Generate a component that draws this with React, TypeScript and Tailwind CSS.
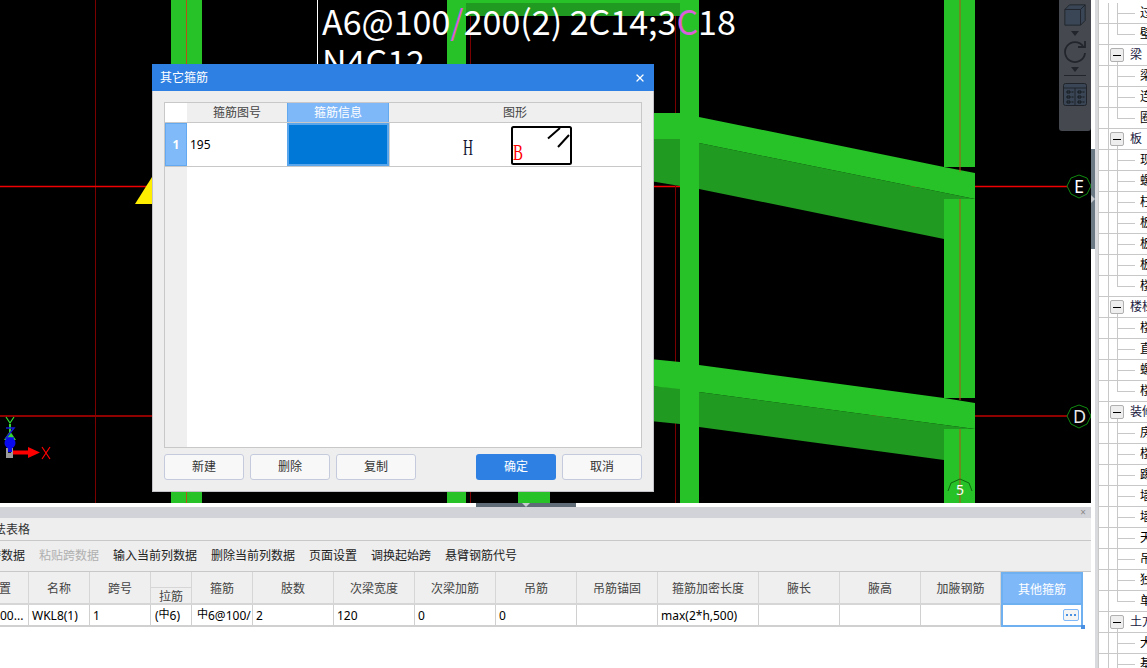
import React from 'react';
import { X } from 'lucide-react';

const uiFont = "font-['Noto_Sans','Noto_Sans_CJK_SC',sans-serif]";

const CanvasDrawing = () => (
  <svg width="1091" height="503" viewBox="0 0 1091 503" className="absolute left-0 top-0">
    {/* axis lines */}
    <line x1="95.5" y1="0" x2="95.5" y2="503" stroke="#7a0000" />
    <line x1="0" y1="186.5" x2="1068" y2="186.5" stroke="#f00000" strokeWidth="1.5" />
    <line x1="0" y1="416" x2="1068" y2="416" stroke="#8f0000" strokeWidth="2" />
    <line x1="317.5" y1="0" x2="317.5" y2="70" stroke="#ffffff" />

    {/* columns */}
    <rect x="171" y="0" width="31" height="503" fill="#27c227" />
    <line x1="186.5" y1="0" x2="186.5" y2="503" stroke="#b8501a" />
    <rect x="447" y="0" width="252" height="3" fill="#27c227" />
    <rect x="465" y="3" width="215" height="13" fill="#209a20" />
    <rect x="447" y="0" width="19" height="503" fill="#27c227" />
    <rect x="518" y="480" width="32" height="23" fill="#27c227" />
    <line x1="470.5" y1="16" x2="470.5" y2="503" stroke="#7a0000" />
    <line x1="675.5" y1="16" x2="675.5" y2="503" stroke="#7a0000" />

    {/* upper beam */}
    <polygon points="650,139 680,139 699,143 975,199 944,199 944,239 699,189 680,186 650,181" fill="#209a20" />
    <polygon points="650,113 680,113 699,117 944,167 975,173 975,199 699,143 680,139 650,139" fill="#27c227" />
    {/* lower beam */}
    <polygon points="650,386 680,388 699,392 975,429 944,429 944,460 699,427 680,424 650,421" fill="#209a20" />
    <polygon points="650,359 680,362 699,365 944,398 975,403 975,429 699,392 680,389 650,386" fill="#27c227" />

    <rect x="680" y="0" width="19" height="503" fill="#27c227" />
    <rect x="944" y="0" width="31" height="167" fill="#27c227" />
    <rect x="944" y="199" width="31" height="199" fill="#27c227" />
    <rect x="944" y="429" width="31" height="74" fill="#27c227" />
    <line x1="960" y1="0" x2="960" y2="172" stroke="#b8501a" />
    <line x1="960" y1="199" x2="960" y2="400" stroke="#b8501a" />
    <line x1="960" y1="429" x2="960" y2="503" stroke="#b8501a" />

    {/* grid bubbles */}
    <polygon points="1079,175 1087,178 1091,186 1087,194 1079,198 1071,194 1067,186 1071,178" fill="#000000" stroke="#0f8a0f" />
    <polygon points="1079,405 1087,408 1091,416 1087,424 1079,428 1071,424 1067,416 1071,408" fill="#000000" stroke="#0f8a0f" />
    <path d="M948 491 L951 483 L960 479 L969 483 L972 491" fill="none" stroke="#0f6a0f" />

    {/* yellow marker */}
    <polygon points="135,204 152,177 152,204" fill="#ffee00" />

    {/* origin gizmo */}
    <rect x="6" y="448" width="7" height="10" fill="#9a9a9a" />
    <rect x="8" y="448" width="3" height="5" fill="#1a1a1a" />
    <polygon points="10,431 16,440 4,440" fill="#33d633" />
    <line x1="10" y1="424" x2="10" y2="434" stroke="#33d633" strokeWidth="2" />
    <path d="M6 428 H14 L6 438 H14" fill="none" stroke="#1a1ad8" strokeWidth="1.5" />
    <circle cx="10" cy="443" r="5.5" fill="#0a0aee" />
    <rect x="8" y="447" width="4" height="5" fill="#0a0aee" />
    <rect x="13" y="450.5" width="16" height="4" fill="#ff0000" />
    <polygon points="28,447 40,452.5 28,458" fill="#ff0000" />
    <path d="M6 417 L10 423 L14 417" fill="none" stroke="#33e033" strokeWidth="1.2" />
    <path d="M42 447 L50 459 M50 447 L42 459" fill="none" stroke="#ff0000" strokeWidth="1.2" />
  </svg>
);

const ViewWidget = () => (
  <div className="absolute right-0 top-0 flex h-[131px] w-[32px] flex-col items-center rounded-b-[3px] bg-[#45494f] pt-[3px]">
    <svg width="24" height="24" viewBox="0 0 26 24">
      <path d="M2 6 L7 1 H24 V18 L19 23 H2 Z" fill="#3a4656" stroke="#20242a" />
      <path d="M2 6 H19 V23 M19 6 L24 1" fill="none" stroke="#20242a" />
    </svg>
    <svg width="8" height="5" viewBox="0 0 8 5" className="mt-[4px]">
      <polygon points="0,0 8,0 4,5" fill="#22262c" />
    </svg>
    <svg width="24" height="24" viewBox="0 0 24 24" className="mt-[4px]">
      <path d="M20 6 A10 10 0 1 0 22 13" fill="none" stroke="#22262c" strokeWidth="1.8" />
      <path d="M15 7 H22 V1" fill="none" stroke="#22262c" strokeWidth="1.8" />
    </svg>
    <svg width="8" height="5" viewBox="0 0 8 5" className="mt-[3px]">
      <polygon points="0,0 8,0 4,5" fill="#22262c" />
    </svg>
    <div className="mt-[3px] h-px w-[22px] bg-[#22262c]" />
    <svg width="24" height="23" viewBox="0 0 24 23" className="mt-[7px]">
      <rect x="0.5" y="0.5" width="23" height="22" rx="2" fill="#3a4656" stroke="#20242a" />
      <path d="M1 5 H23 M12 5 V22" stroke="#20242a" />
      <path d="M4 8 H7 V10 H4 Z M4 13 H7 V15 H4 Z M4 18 H7 V20 H4 Z M15 8 H18 V10 H15 Z M15 13 H18 V15 H15 Z M15 18 H18 V20 H15 Z" fill="none" stroke="#15181c" />
      <path d="M8.5 9 H10.5 M8.5 14 H10.5 M8.5 19 H10.5 M19.5 9 H21.5 M19.5 14 H21.5 M19.5 19 H21.5" stroke="#15181c" />
    </svg>
  </div>
);

const dialogButton = 'flex h-[26px] w-[80px] items-center justify-center rounded-[3px] border border-[#c5cbdc] bg-[#f8f8f8] text-[12px] text-[#333333]';

const StirrupDialog = () => (
  <div className="absolute left-[152px] top-[64px] flex h-[428px] w-[502px] flex-col border border-t-0 border-[#c4c4c8] bg-[#eeeeee]">
    <div className="-mx-px flex h-[27px] shrink-0 items-center justify-between bg-[#2e80e2] pl-[8px] pr-[8px] text-[12px] text-white">
      <span>其它箍筋</span>
      <X size={12} strokeWidth={2.5} />
    </div>
    <div className="mx-[11px] mt-[11px] flex h-[346px] w-[478px] flex-col border border-[#c8c8c8] bg-white">
      <div className="grid h-[20px] shrink-0 grid-cols-[22px_100px_102px_1fr] border-b border-[#c8c8c8] text-[12px] leading-[19px] text-[#444444]">
        <div className="bg-white" />
        <div className="bg-[#efefef] text-center">箍筋图号</div>
        <div className="border-x border-[#62a9ef] bg-[#7fb8f8] text-center text-white">箍筋信息</div>
        <div className="bg-[#efefef] text-center">图形</div>
      </div>
      <div className="grid h-[44px] shrink-0 grid-cols-[22px_100px_102px_1fr] border-b border-[#c8c8c8]">
        <div className="flex items-center justify-center border border-[#62a9ef] bg-[#80baf9] text-[12px] font-bold text-white">1</div>
        <div className="pl-[3px] pt-[12px] text-[12px] leading-[20px] text-black">195</div>
        <div className="border-2 border-[#5aa6ec] bg-[#0078d7]" />
        <div className="relative border-l border-[#d0d0d0]">
          <svg width="200" height="43" viewBox="0 0 200 43" className="absolute left-[69px] top-0">
            <text x="4" y="32" fontFamily="'Liberation Serif', serif" fontSize="23" textLength="10" lengthAdjust="spacingAndGlyphs" fill="#101030">H</text>
            <rect x="53" y="4" width="59" height="37" rx="1.5" fill="#ffffff" stroke="#000000" strokeWidth="2" />
            <path d="M89 15.5 L101 5 M99 24 L110 12" stroke="#000000" strokeWidth="2" fill="none" />
            <text x="54" y="37" fontFamily="'Liberation Serif', serif" fontSize="23" textLength="10" lengthAdjust="spacingAndGlyphs" fill="#ff0000">B</text>
          </svg>
        </div>
      </div>
      <div className="flex-1 overflow-hidden">
        <div className="h-full w-[22px] bg-[#efefef]" />
      </div>
    </div>
    <div className="mx-[11px] mt-[6px] flex justify-between">
      <div className="flex gap-[6px]">
        <div className={dialogButton}>新建</div>
        <div className={dialogButton}>删除</div>
        <div className={dialogButton}>复制</div>
      </div>
      <div className="flex gap-[6px]">
        <div className="flex h-[26px] w-[80px] items-center justify-center rounded-[3px] bg-[#2e80e2] text-[12px] text-white">确定</div>
        <div className={dialogButton}>取消</div>
      </div>
    </div>
  </div>
);

const Canvas = () => (
  <div className="relative h-[503px] shrink-0 overflow-hidden bg-black">
    <CanvasDrawing />
    <div className="absolute left-[322px] top-[-1px] whitespace-nowrap font-['Noto_Sans_CJK_SC',sans-serif] text-[34px] leading-[44px] text-white">
      A6@100<span className="text-[#d860d8]">/</span>200(2) 2C14;3<span className="text-[#d860d8]">C</span>18
    </div>
    <div className="absolute left-[322px] top-[39px] whitespace-nowrap font-['Noto_Sans_CJK_SC',sans-serif] text-[34px] leading-[44px] text-white">N4C12</div>
    <div className="absolute left-[1074px] top-[176px] text-[18px] leading-[20px] text-white">E</div>
    <div className="absolute left-[1073px] top-[406px] text-[18px] leading-[20px] text-[#e8e8e8]">D</div>
    <div className="absolute left-[956px] top-[480px] text-[14px] leading-[20px] text-white">5</div>
    <ViewWidget />
    <StirrupDialog />
  </div>
);

const headers = ['位置', '名称', '跨号', '', '箍筋', '肢数', '次梁宽度', '次梁加筋', '吊筋', '吊筋锚固', '箍筋加密长度', '腋长', '腋高', '加腋钢筋'];
const rowCells = ['00...', 'WKL8(1)', '1', '', '', '2', '120', '0', '0', '', 'max(2*h,500)', '', '', ''];
const gridCols = 'grid grid-cols-[29px_61px_61px_41px_61px_81px_81px_81px_81px_81px_101px_81px_81px_80px_82px]';

const BeamTable = () => (
  <div className="flex flex-1 flex-col overflow-hidden bg-white">
    <div className="h-[4px] shrink-0 bg-white" />
    <div className="relative h-[11px] shrink-0 bg-[#d2d3d9]">
      <div className="absolute left-[476px] top-[-4px] flex h-[4px] w-[100px] justify-center bg-[#5f6b76]">
        <svg width="8" height="4" viewBox="0 0 8 4"><polygon points="0,0 8,0 4,4" fill="#c8ccd0" /></svg>
      </div>
      <div className="absolute right-[5px] top-0 text-[10px] leading-[11px] text-[#8a8a8a]">×</div>
    </div>
    <div className="flex h-[23px] shrink-0 items-center overflow-hidden border-b border-[#c8c8c8] bg-[#eeeeee] pt-[1px] text-[12px] text-[#333333]">
      <span className="-ml-[30px] whitespace-nowrap">梁平法表格</span>
    </div>
    <div className="flex h-[31px] shrink-0 items-center gap-[14px] overflow-hidden whitespace-nowrap border-b border-[#c8c8c8] bg-[#eeeeee] text-[12px] text-[#222222]">
      <span className="-ml-[35px]">复制跨数据</span>
      <span className="text-[#b0b0b0]">粘贴跨数据</span>
      <span>输入当前列数据</span>
      <span>删除当前列数据</span>
      <span>页面设置</span>
      <span>调换起始跨</span>
      <span>悬臂钢筋代号</span>
    </div>
    <div className={gridCols}>
      {headers.map((title, i) =>
        i === 3 ? (
          <div key={i} className="flex h-[33px] flex-col border-r border-b-2 border-[#d6d6d6] bg-[#efefef]">
            <div className="h-[16px] shrink-0 border-b border-[#d6d6d6]" />
            <div className="flex-1 text-center text-[12px] leading-[18px] text-[#444444]">拉筋</div>
          </div>
        ) : (
          <div key={i} className="flex h-[33px] items-center justify-center overflow-hidden whitespace-nowrap border-r border-b-2 border-[#d6d6d6] bg-[#efefef] pt-[2px] text-[12px] text-[#444444]">
            {i === 0 ? <span className="-ml-[30px]">{title}</span> : title}
          </div>
        )
      )}
      <div className="flex h-[33px] items-center justify-center border-2 border-[#6fb0f0] bg-[#7fb8f8] pt-[2px] text-[12px] text-white">其他箍筋</div>

      {rowCells.map((text, i) => (
        <div key={i} className="flex h-[22px] items-center justify-start overflow-hidden whitespace-nowrap border-r border-b-2 border-[#d0d0d0] pl-[3px] pt-[2px] text-[12px] text-black">
          {i === 0 && <span className="-ml-[3px]">{text}</span>}
          {i === 3 && <span className="pl-[1px]">(<span className="relative top-[-2px] text-[11px]">中</span>6)</span>}
          {i === 4 && <span className="pl-[2px]"><span className="relative top-[-2px] text-[11px]">中</span>6@100/</span>}
          {i !== 0 && i !== 3 && i !== 4 && text}
        </div>
      ))}
      <div className="relative flex h-[22px] items-center justify-end border-x-2 border-b-2 border-[#6fb0f0] pr-[2px]">
        <div className="flex h-[12px] w-[16px] items-center justify-center gap-[2px] rounded-[2px] border border-[#7fb8f8] bg-[#f4f4f4]">
          <span className="h-[2px] w-[2px] bg-[#4a90e2]" />
          <span className="h-[2px] w-[2px] bg-[#4a90e2]" />
          <span className="h-[2px] w-[2px] bg-[#4a90e2]" />
        </div>
        <span className="absolute right-[-4px] bottom-[-4px] h-[4px] w-[4px] bg-[#4a90e2]" />
      </div>
    </div>
  </div>
);

type TreeRow = { label: string; group?: boolean; last?: boolean };

const treeRows: TreeRow[] = [
  { label: '过梁' }, { label: '壁龛', last: true },
  { label: '梁', group: true }, { label: '梁' }, { label: '连梁' }, { label: '圈梁', last: true },
  { label: '板', group: true }, { label: '现浇板' }, { label: '螺旋板' }, { label: '柱帽' }, { label: '板洞' }, { label: '板受力筋' }, { label: '板负筋' }, { label: '楼层板带', last: true },
  { label: '楼梯', group: true }, { label: '楼梯' }, { label: '直形梯段' }, { label: '螺旋梯段' }, { label: '楼梯井', last: true },
  { label: '装修', group: true }, { label: '房间' }, { label: '楼地面' }, { label: '踢脚' }, { label: '墙裙' }, { label: '墙面' }, { label: '天棚' }, { label: '吊顶' }, { label: '独立柱装修' }, { label: '单梁装修', last: true },
  { label: '土方', group: true }, { label: '大开挖土方' }, { label: '基槽土方' },
];

const Tree = () => (
  <div className="flex w-[49px] shrink-0 flex-col overflow-hidden border-l border-[#c8c8c8] bg-white pt-[3px] text-[12px] text-black">
    {treeRows.map((row, i) => (
      <div key={i} className="relative flex h-[21px] shrink-0 items-center whitespace-nowrap border-b border-[#c8c8c8]">
        <span className="absolute bottom-[-1px] left-[9px] top-0 w-px bg-[#c8c8c8]" />
        {row.group ? (
          <>
            <span className="absolute left-[18px] top-[10px] h-[12px] w-px bg-[#c8c8c8]" />
            <span className="absolute left-[11px] top-[3px] flex h-[14px] w-[14px] items-center justify-center rounded-[2px] border border-[#b0b0b0] bg-[#eeeeee]">
              <span className="h-px w-[8px] bg-black" />
            </span>
            <span className="pl-[31px] text-[#202040]">{row.label}</span>
          </>
        ) : (
          <>
            <span className={row.last ? 'absolute left-[18px] top-0 h-[10px] w-px bg-[#c8c8c8]' : 'absolute bottom-[-1px] left-[18px] top-0 w-px bg-[#c8c8c8]'} />
            <span className="absolute left-[18px] top-[10px] h-px w-[18px] bg-[#c8c8c8]" />
            <span className="pl-[41px]">{row.label}</span>
          </>
        )}
      </div>
    ))}
  </div>
);

export default function App() {
  return (
    <div className={`flex h-[668px] w-[1147px] overflow-hidden bg-white ${uiFont}`}>
      <div className="flex w-[1091px] shrink-0 flex-col">
        <Canvas />
        <BeamTable />
      </div>
      <div className="flex w-[4px] shrink-0 flex-col bg-white pt-[149px]">
        <div className="flex h-[100px] items-center bg-[#6c7a86]">
          <svg width="4" height="8" viewBox="0 0 4 8"><polygon points="0,0 4,4 0,8" fill="#c8ccd0" /></svg>
        </div>
      </div>
      <div className="w-[3px] shrink-0 bg-[#d9dadd]" />
      <Tree />
    </div>
  );
}
